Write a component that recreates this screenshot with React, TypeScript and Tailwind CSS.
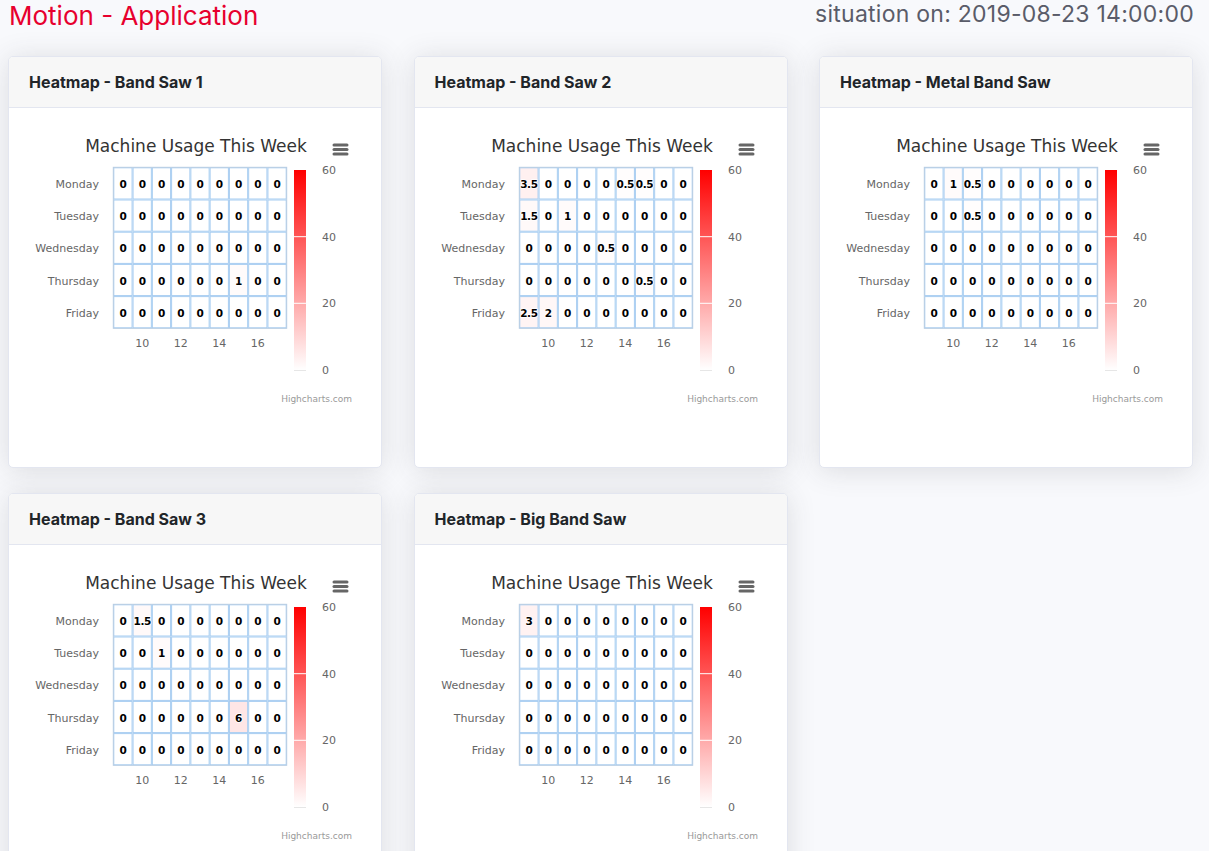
const HOURS = 9;
const DAYS = ["Monday", "Tuesday", "Wednesday", "Thursday", "Friday"];

const z = () => Array(HOURS).fill(0);

const machines = [
  {
    name: "Band Saw 1",
    data: [z(), z(), z(), [0, 0, 0, 0, 0, 0, 1, 0, 0], z()],
  },
  {
    name: "Band Saw 2",
    data: [
      [3.5, 0, 0, 0, 0, 0.5, 0.5, 0, 0],
      [1.5, 0, 1, 0, 0, 0, 0, 0, 0],
      [0, 0, 0, 0, 0.5, 0, 0, 0, 0],
      [0, 0, 0, 0, 0, 0, 0.5, 0, 0],
      [2.5, 2, 0, 0, 0, 0, 0, 0, 0],
    ],
  },
  {
    name: "Metal Band Saw",
    data: [
      [0, 1, 0.5, 0, 0, 0, 0, 0, 0],
      [0, 0, 0.5, 0, 0, 0, 0, 0, 0],
      z(),
      z(),
      z(),
    ],
  },
  {
    name: "Band Saw 3",
    data: [
      [0, 1.5, 0, 0, 0, 0, 0, 0, 0],
      [0, 0, 1, 0, 0, 0, 0, 0, 0],
      z(),
      [0, 0, 0, 0, 0, 0, 6, 0, 0],
      z(),
    ],
  },
  {
    name: "Big Band Saw",
    data: [[3, 0, 0, 0, 0, 0, 0, 0, 0], z(), z(), z(), z()],
  },
];

// plot area of the heatmap inside the card body
const PX = 103.3;
const PY = 59.3;
const CW = 173.4 / HOURS;
const CH = 161 / 5;
const MAX = 60;

function cellColor(v: number) {
  const t = Math.min(v / MAX, 1);
  const g = Math.round(255 * (1 - t));
  return `rgb(255,${g},${g})`;
}

function Heatmap({ id, data }: { id: string; data: number[][] }) {
  const font = "'DejaVu Sans', Verdana, sans-serif";
  return (
    <svg width="371" height="359" style={{ fontFamily: font }}>
      <defs>
        <linearGradient id={id} x1="0" y1="1" x2="0" y2="0">
          <stop offset="0" stopColor="#ffffff" />
          <stop offset="1" stopColor="#ff0000" />
        </linearGradient>
      </defs>

      <text x="186" y="44" textAnchor="middle" fontSize="17" fill="#333333">
        Machine Usage This Week
      </text>

      {/* export menu button */}
      <g stroke="#666666" strokeWidth="3" strokeLinecap="round">
        <line x1="324" y1="37" x2="337" y2="37" />
        <line x1="324" y1="41.5" x2="337" y2="41.5" />
        <line x1="324" y1="46" x2="337" y2="46" />
      </g>

      {DAYS.map((d, r) => (
        <text key={d} x="89" y={PY + CH * r + CH / 2 + 4.5} textAnchor="end" fontSize="11" fill="#666666">
          {d}
        </text>
      ))}

      {[10, 12, 14, 16].map((h) => (
        <text key={h} x={PX + CW * (h - 9) + CW / 2} y="239" textAnchor="middle" fontSize="11" fill="#666666">
          {h}
        </text>
      ))}

      {data.map((row, r) =>
        row.map((v, c) => {
          const x = PX + CW * c;
          const y = PY + CH * r;
          return (
            <g key={`${r}-${c}`}>
              <rect
                x={x + 0.5}
                y={y + 0.5}
                width={CW - 1}
                height={CH - 1}
                fill={cellColor(v)}
                stroke="#a7cdf1"
                strokeWidth="1"
              />
              <text
                x={x + CW / 2}
                y={y + CH / 2 + 4.5}
                textAnchor="middle"
                fontSize="10.5"
                fontWeight="bold"
                letterSpacing="-0.4"
                fill="#000000"
                stroke="#ffffff"
                strokeWidth="1.5"
                paintOrder="stroke"
                strokeLinejoin="round"
              >
                {v}
              </text>
            </g>
          );
        })
      )}
      <rect x={PX} y={PY} width={CW * HOURS} height={CH * 5} fill="none" stroke="#b8cde3" strokeWidth="1" />

      {/* colour axis */}
      <rect x="284" y="62" width="12" height="200" fill={`url(#${id})`} />
      <line x1="284" y1="128.7" x2="296" y2="128.7" stroke="#ffffff" strokeWidth="1" />
      <line x1="284" y1="195.3" x2="296" y2="195.3" stroke="#ffffff" strokeWidth="1" />
      <line x1="284" y1="262.5" x2="296" y2="262.5" stroke="#e6e6e6" strokeWidth="1" />
      {[60, 40, 20, 0].map((t, i) => (
        <text key={t} x="312" y={62 + i * 66.67 + 4} fontSize="11" fill="#666666">
          {t}
        </text>
      ))}

      <text x="342" y="294" textAnchor="end" fontSize="9" fill="#999999">
        Highcharts.com
      </text>
    </svg>
  );
}

function Card({ name, data, idx }: { name: string; data: number[][]; idx: number }) {
  return (
    <div className="h-[412px] overflow-hidden rounded-[5px] border border-[#e3e6f0] bg-white shadow-[0_0.15rem_1.75rem_0_rgba(58,59,69,0.15)]">
      <div className="flex h-[51px] items-center border-b border-[#e3e6f0] bg-[#f7f7f7] pl-[20px]">
        <h6 className="text-[16px] font-bold text-[#212529]">Heatmap - {name}</h6>
      </div>
      <div className="h-[359px] pl-[1px]">
        <Heatmap id={`grad-${idx}`} data={data} />
      </div>
    </div>
  );
}

export default function App() {
  return (
    <div className="min-h-screen bg-[#f8f9fc] pl-[8px] font-['Inter',sans-serif]">
      <div className="flex h-[56px] w-[1186px] items-start justify-between pl-[1px]">
        <h1 className="text-[26px] leading-[32px] text-[#e7002e]">Motion - Application</h1>
        <div className="text-[23px] leading-[28px] tracking-[0.25px] text-[#5a5c69]">situation on: 2019-08-23 14:00:00</div>
      </div>
      <div className="grid grid-cols-[374px_374px_374px] gap-x-[31.5px] gap-y-[25px]">
        {machines.map((m, i) => (
          <Card key={m.name} name={m.name} data={m.data} idx={i} />
        ))}
      </div>
    </div>
  );
}
